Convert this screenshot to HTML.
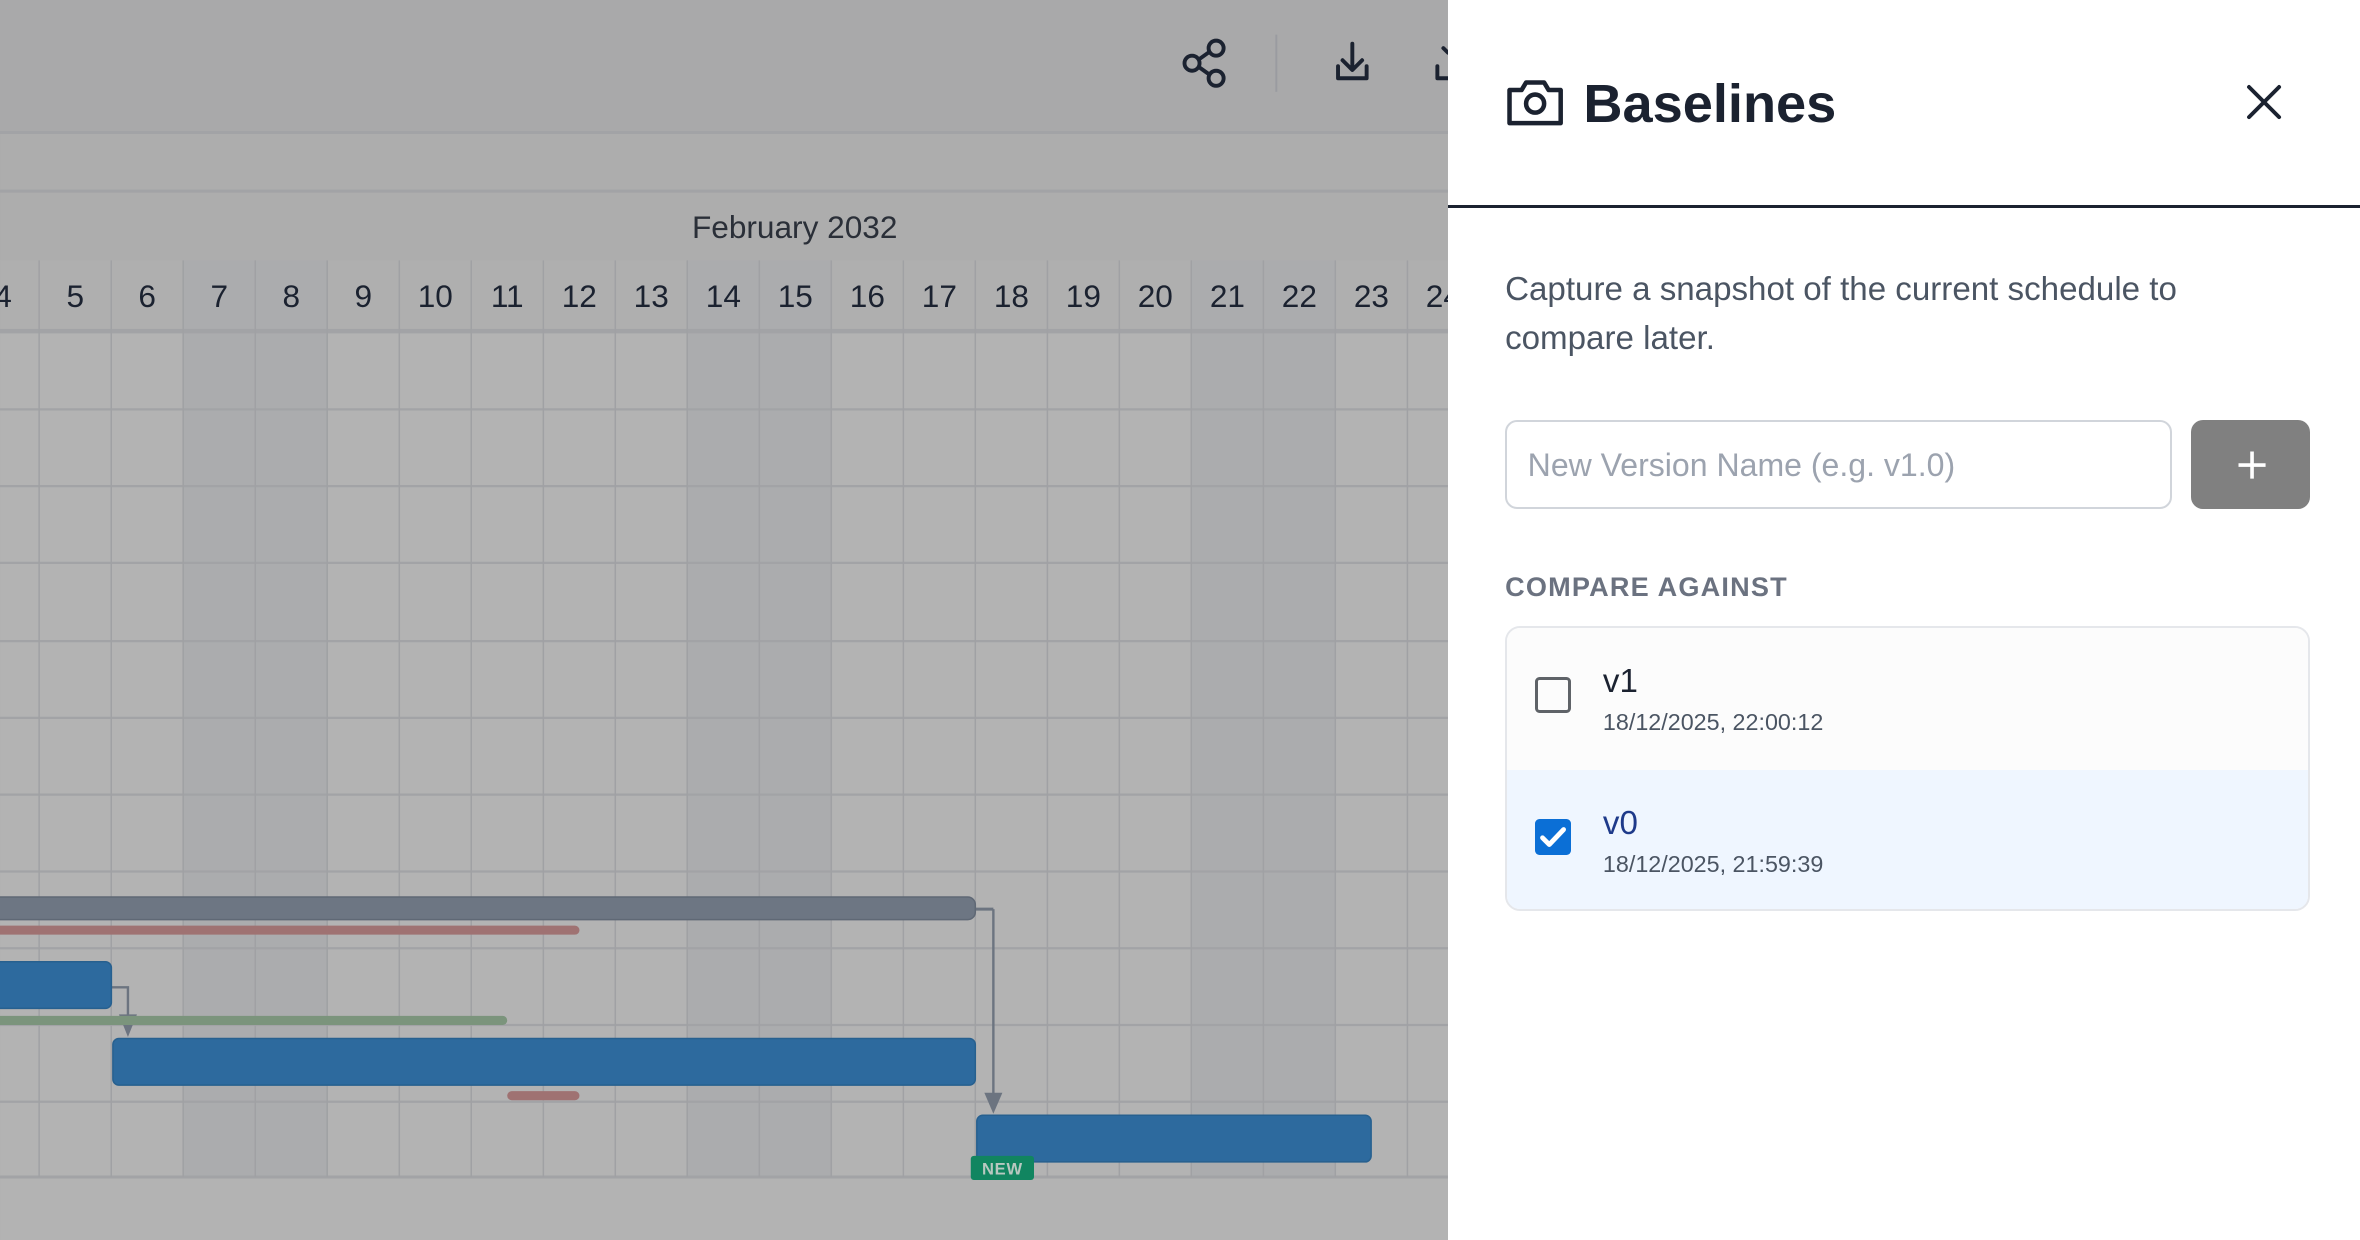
<!DOCTYPE html>
<html><head><meta charset="utf-8"><style>
html,body{margin:0;padding:0;width:2360px;height:1240px;overflow:hidden;background:#b2b2b2}
#w{position:absolute;left:0;top:0;width:1568px;height:824px;zoom:1.50510;font-family:"Liberation Sans",sans-serif;overflow:hidden}
.a{position:absolute}
#panel{position:absolute;left:962px;top:0;width:606px;height:824px;background:#fff}
</style></head><body><div id="w">
<svg class="a" style="left:0;top:0" width="962" height="824" viewBox="0 0 962 824" font-family="Liberation Sans, sans-serif">
<rect x="0" y="0" width="962" height="88" fill="#a9a9aa"/>
<rect x="0" y="88" width="962" height="85" fill="#adadad"/>
<rect x="0" y="173" width="962" height="47" fill="#afafaf"/>
<rect x="0" y="220" width="962" height="604" fill="#b3b3b3"/>
<g fill="#abacae">
<rect x="121.7" y="173" width="95.7" height="609"/>
<rect x="456.6" y="173" width="95.7" height="609"/>
<rect x="791.5" y="173" width="95.7" height="609"/>
</g>
<g stroke="#a2a3a6" stroke-width="1">
<line x1="0" y1="88" x2="962" y2="88" stroke-width="2"/>
<line x1="0" y1="127" x2="962" y2="127" stroke-width="2"/>
<line x1="0" y1="220" x2="962" y2="220" stroke-width="3"/>
<line x1="0" y1="272" x2="962" y2="272" stroke-width="1.5"/>
<line x1="0" y1="323" x2="962" y2="323" stroke-width="1.5"/>
<line x1="0" y1="374" x2="962" y2="374" stroke-width="1.5"/>
<line x1="0" y1="426" x2="962" y2="426" stroke-width="1.5"/>
<line x1="0" y1="477" x2="962" y2="477" stroke-width="1.5"/>
<line x1="0" y1="528" x2="962" y2="528" stroke-width="1.5"/>
<line x1="0" y1="579" x2="962" y2="579" stroke-width="1.5"/>
<line x1="0" y1="630" x2="962" y2="630" stroke-width="1.5"/>
<line x1="0" y1="681" x2="962" y2="681" stroke-width="1.5"/>
<line x1="0" y1="732" x2="962" y2="732" stroke-width="1.5"/>
<line x1="0" y1="782" x2="962" y2="782" stroke-width="2"/>
</g>
<g stroke="#a0a1a4" stroke-width="1">
<line x1="26" y1="173" x2="26" y2="782"/><line x1="73.9" y1="173" x2="73.9" y2="782"/>
<line x1="121.7" y1="173" x2="121.7" y2="782"/><line x1="169.6" y1="173" x2="169.6" y2="782"/>
<line x1="217.4" y1="173" x2="217.4" y2="782"/><line x1="265.3" y1="173" x2="265.3" y2="782"/>
<line x1="313.1" y1="173" x2="313.1" y2="782"/><line x1="361" y1="173" x2="361" y2="782"/>
<line x1="408.8" y1="173" x2="408.8" y2="782"/><line x1="456.6" y1="173" x2="456.6" y2="782"/>
<line x1="504.5" y1="173" x2="504.5" y2="782"/><line x1="552.3" y1="173" x2="552.3" y2="782"/>
<line x1="600.2" y1="173" x2="600.2" y2="782"/><line x1="648" y1="173" x2="648" y2="782"/>
<line x1="695.9" y1="173" x2="695.9" y2="782"/><line x1="743.7" y1="173" x2="743.7" y2="782"/>
<line x1="791.5" y1="173" x2="791.5" y2="782"/><line x1="839.4" y1="173" x2="839.4" y2="782"/>
<line x1="887.2" y1="173" x2="887.2" y2="782"/><line x1="935.1" y1="173" x2="935.1" y2="782"/>
</g>
<text x="528" y="158" font-size="21" fill="#2a2f38" text-anchor="middle">February 2032</text>
<g font-size="21" fill="#1b2230" text-anchor="middle">
<text x="2" y="204">4</text><text x="50" y="204">5</text><text x="97.8" y="204">6</text><text x="145.7" y="204">7</text><text x="193.5" y="204">8</text><text x="241.4" y="204">9</text><text x="289.2" y="204">10</text><text x="337" y="204">11</text><text x="384.9" y="204">12</text><text x="432.7" y="204">13</text><text x="480.6" y="204">14</text><text x="528.4" y="204">15</text><text x="576.3" y="204">16</text><text x="624.1" y="204">17</text><text x="672" y="204">18</text><text x="719.8" y="204">19</text><text x="767.6" y="204">20</text><text x="815.5" y="204">21</text><text x="863.3" y="204">22</text><text x="911.2" y="204">23</text><text x="959" y="204">24</text>
</g>
<g fill="none" stroke="#1b2230" stroke-width="2.6" stroke-linecap="round" stroke-linejoin="round">
<circle cx="792" cy="42" r="5"/><circle cx="808" cy="32" r="5"/><circle cx="808" cy="52" r="5"/>
<line x1="796.5" y1="39.5" x2="803.5" y2="34.5"/><line x1="796.5" y1="44.5" x2="803.5" y2="49.5"/>
<path d="M889 44v8h19v-8"/><path d="M898.5 29v17M892 40l6.5 6.5 6.5-6.5"/>
<path d="M955 44v8h7"/><path d="M962 35l-3-3"/>
</g>
<line x1="848" y1="23" x2="848" y2="61" stroke="#9a9ba0" stroke-width="1.3"/>
<path d="M660 604h-12" stroke="#6c7480" stroke-width="2" fill="none"/>
<path d="M660 604v128" stroke="#6c7480" stroke-width="1.6" fill="none"/>
<path d="M654 726h12l-6 14z" fill="#6c7480"/>
<path d="M74 656h11v28" stroke="#6c7480" stroke-width="1.6" fill="none"/>
<path d="M79 674h12l-6 15z" fill="#6c7480"/>
<rect x="-10" y="596" width="658" height="15" rx="5" fill="#6d7683" stroke="#5f6875"/>
<rect x="-10" y="615" width="395" height="6" rx="3" fill="#9f7272"/>
<rect x="-10" y="639" width="84" height="31" rx="4" fill="#2d6a9e" stroke="#27608f"/>
<rect x="-10" y="675" width="347" height="6" rx="3" fill="#7b947c"/>
<rect x="75" y="690" width="573" height="31" rx="4" fill="#2d6a9e" stroke="#27608f"/>
<rect x="337" y="725" width="48" height="6" rx="3" fill="#9f7272"/>
<rect x="649" y="741" width="262" height="31" rx="4" fill="#2d6a9e" stroke="#27608f"/>
<rect x="645" y="768" width="42" height="16" rx="2" fill="#118560"/>
<text x="666" y="780.5" font-size="11" font-weight="bold" fill="#b8c8c0" text-anchor="middle" letter-spacing="0.5">NEW</text>
</svg>
<div id="panel">
<svg class="a" style="left:38px;top:50px" width="40" height="36" viewBox="0 0 40 36" fill="none" stroke="#1b2230" stroke-width="3" stroke-linejoin="round"><path d="M3 10h8l3-5h12l3 5h8v22H3z"/><circle cx="20" cy="19" r="6"/></svg>
<div class="a" style="left:90px;top:45px;font-size:36px;font-weight:bold;color:#1b2230;line-height:48px">Baselines</div>
<svg class="a" style="left:530px;top:56px" width="24" height="24" viewBox="0 0 24 24" stroke="#1b2230" stroke-width="2.6" stroke-linecap="round"><path d="M2 2l20 20M22 2L2 22"/></svg>
<div class="a" style="left:0;top:136px;width:606px;height:2px;background:#1b2230"></div>
<div class="a" style="left:38px;top:177px;width:500px;font-size:22px;line-height:32px;color:#4b5563">Capture a snapshot of the current schedule to compare later.</div>
<div class="a" style="left:38px;top:279px;width:443px;height:59px;border:1.5px solid #d1d5db;border-radius:8px;box-sizing:border-box"></div>
<div class="a" style="left:53px;top:296px;font-size:21.3px;color:#9ca3af;line-height:26px">New Version Name (e.g. v1.0)</div>
<div class="a" style="left:494px;top:279px;width:79px;height:59px;background:#808080;border-radius:8px"></div>
<svg class="a" style="left:524px;top:299px" width="20" height="20" viewBox="0 0 20 20" stroke="#fff" stroke-width="2.4"><path d="M10 1v18M1 10h18"/></svg>
<div class="a" style="left:38px;top:379px;font-size:18px;font-weight:bold;color:#6b7280;letter-spacing:0.8px;line-height:22px">COMPARE AGAINST</div>
<div class="a" style="left:38px;top:416px;width:535px;height:189px;border:1.5px solid #e5e7eb;border-radius:10px;box-sizing:border-box;overflow:hidden">
 <div style="height:94px;background:#fcfcfc"></div>
 <div style="height:95px;background:#eff6ff"></div>
</div>
<div class="a" style="left:58px;top:450px;width:24px;height:24px;border:2px solid #5f6368;border-radius:3px;box-sizing:border-box"></div>
<div class="a" style="left:103px;top:440px;font-size:22px;color:#1b2230;line-height:26px">v1</div>
<div class="a" style="left:103px;top:470px;font-size:15.5px;color:#4b5563;line-height:20px">18/12/2025, 22:00:12</div>
<div class="a" style="left:58px;top:544px;width:24px;height:24px;background:#0b6fd6;border-radius:3px"></div>
<svg class="a" style="left:58px;top:544px" width="24" height="24" viewBox="0 0 24 24" fill="none" stroke="#fff" stroke-width="3.2" stroke-linecap="round" stroke-linejoin="round"><path d="M5 12.5l4.5 4.5L19 7"/></svg>
<div class="a" style="left:103px;top:534px;font-size:22px;color:#1e3a8a;line-height:26px">v0</div>
<div class="a" style="left:103px;top:564px;font-size:15.5px;color:#4b5563;line-height:20px">18/12/2025, 21:59:39</div>
</div>
</div></body></html>
